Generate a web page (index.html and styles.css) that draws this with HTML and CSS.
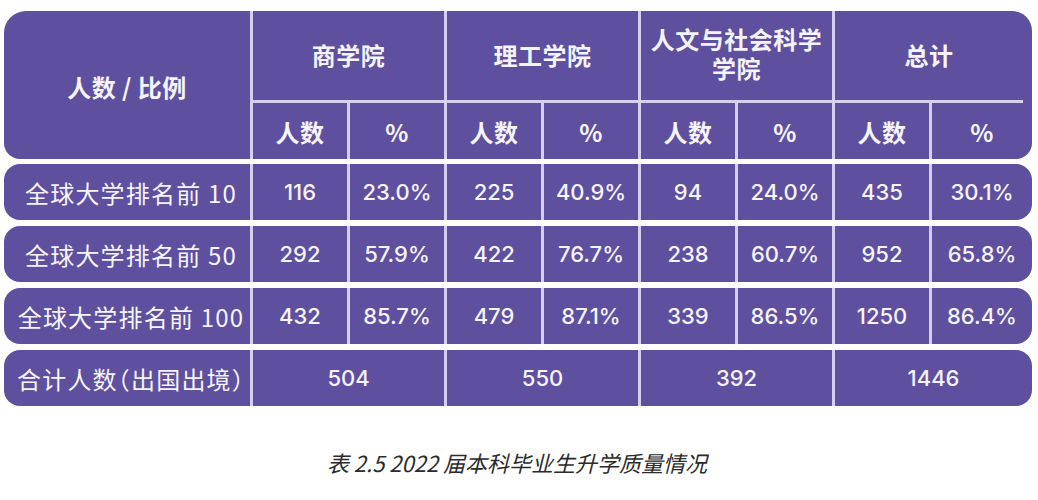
FILE: index.html
```html
<!DOCTYPE html>
<html lang="zh-CN">
<head>
<meta charset="utf-8">
<title>2022 届本科毕业生升学质量情况</title>
<link rel="stylesheet" href="styles.css">
</head>
<body>
<div class="table">
  <div class="head">
    <div class="hcell corner">人数 / 比例</div>
    <div class="hcell group">商学院</div>
    <div class="hcell group">理工学院</div>
    <div class="hcell group two">人文与社会科学学院</div>
    <div class="hcell group last">总计</div>
    <div class="hcell sub">人数</div>
    <div class="hcell sub">%</div>
    <div class="hcell sub">人数</div>
    <div class="hcell sub">%</div>
    <div class="hcell sub">人数</div>
    <div class="hcell sub">%</div>
    <div class="hcell sub">人数</div>
    <div class="hcell sub">%</div>
  </div>
  <div class="row">
    <div class="label">全球大学排名前 10</div>
    <div class="cell">116</div>
    <div class="cell">23.0%</div>
    <div class="cell">225</div>
    <div class="cell">40.9%</div>
    <div class="cell">94</div>
    <div class="cell">24.0%</div>
    <div class="cell">435</div>
    <div class="cell">30.1%</div>
  </div>
  <div class="row">
    <div class="label">全球大学排名前 50</div>
    <div class="cell">292</div>
    <div class="cell">57.9%</div>
    <div class="cell">422</div>
    <div class="cell">76.7%</div>
    <div class="cell">238</div>
    <div class="cell">60.7%</div>
    <div class="cell">952</div>
    <div class="cell">65.8%</div>
  </div>
  <div class="row">
    <div class="label">全球大学排名前 100</div>
    <div class="cell">432</div>
    <div class="cell">85.7%</div>
    <div class="cell">479</div>
    <div class="cell">87.1%</div>
    <div class="cell">339</div>
    <div class="cell">86.5%</div>
    <div class="cell">1250</div>
    <div class="cell">86.4%</div>
  </div>
  <div class="row">
    <div class="label half">合计人数（出国出境）</div>
    <div class="cell span2">504</div>
    <div class="cell span2">550</div>
    <div class="cell span2">392</div>
    <div class="cell span2">1446</div>
  </div>
</div>
<p class="caption">表 2.5 2022 届本科毕业生升学质量情况</p>
</body>
</html>
```

FILE: styles.css
```css
* {
  box-sizing: border-box;
}

body {
  margin: 0;
  background: #ffffff;
  font-family: "Inter", "Noto Sans CJK SC", sans-serif;
  color: #f5f3fb;
}

.table {
  margin: 11px 0 0 4px;
  width: 1028px;
  display: flex;
  flex-direction: column;
  gap: 6px;
}

.head,
.row {
  display: grid;
  grid-template-columns: 246px repeat(7, 97px) 103px;
  background: #5e509e;
}

.head {
  grid-template-rows: 92px 56px;
  border-radius: 22px 20px 16px 16px;
  margin-bottom: -1px;
}

.hcell {
  display: flex;
  align-items: center;
  justify-content: center;
  text-align: center;
  font-family: "Noto Sans CJK SC", sans-serif;
  font-weight: 700;
  font-size: 24px;
  letter-spacing: 0.5px;
}

.corner {
  grid-row: 1 / 3;
  padding-top: 2px;
}

.group {
  grid-column: span 2;
  border-left: 3px solid #d6cff0;
  border-bottom: 3px solid #d6cff0;
  padding-bottom: 2px;
}

.group.two {
  line-height: 29px;
  padding: 0 6px 6px;
}

.group.last {
  margin-right: 9px;
}

.sub {
  border-left: 3px solid #d6cff0;
}

.row {
  height: 56px;
  border-radius: 16px;
}

.label {
  display: flex;
  align-items: center;
  justify-content: center;
  white-space: nowrap;
  padding-left: 8px;
  font-family: "Noto Sans CJK SC", sans-serif;
  font-size: 24px;
  letter-spacing: 1.2px;
}

.label.half {
  font-feature-settings: "halt";
}

.cell {
  display: flex;
  align-items: center;
  justify-content: center;
  border-left: 3px solid #d6cff0;
  font-size: 22px;
  font-weight: 500;
  white-space: nowrap;
}

.span2 {
  grid-column: span 2;
}

.caption {
  margin: 41px 4px 0 0;
  text-align: center;
  font-family: "Noto Sans CJK SC", sans-serif;
  font-style: italic;
  font-size: 22px;
  line-height: 30px;
  color: #2b2b2b;
}
```
